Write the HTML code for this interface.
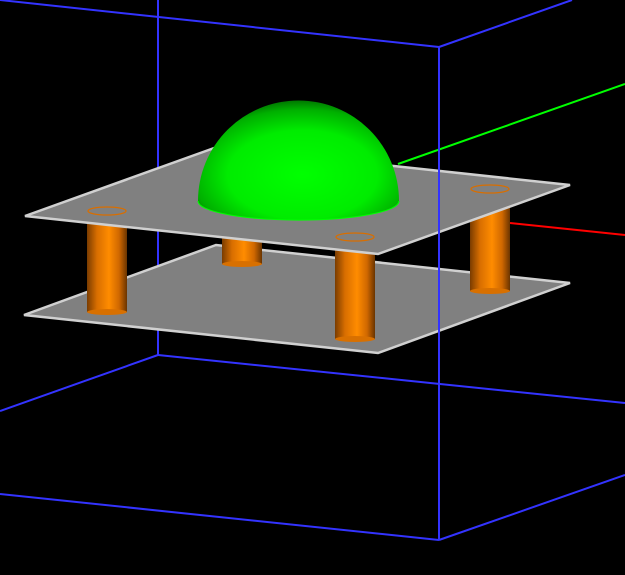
<!DOCTYPE html>
<html><head><style>html,body{margin:0;padding:0;background:#000;}svg{display:block}</style></head>
<body>
<svg width="625" height="575" viewBox="0 0 625 575" xmlns="http://www.w3.org/2000/svg">
<defs>
<linearGradient id="cyl" x1="0" x2="1" y1="0" y2="0">
<stop offset="0" stop-color="#7a3c00"/><stop offset="0.25" stop-color="#d86e00"/><stop offset="0.55" stop-color="#ff8c00"/><stop offset="0.8" stop-color="#d06800"/><stop offset="1" stop-color="#6a3400"/>
</linearGradient>
<radialGradient id="dome" cx="0.52" cy="0.62" r="0.62">
<stop offset="0" stop-color="#00ff00"/><stop offset="0.6" stop-color="#00ec00"/><stop offset="0.88" stop-color="#00b000"/><stop offset="1" stop-color="#007800"/>
</radialGradient>
</defs>
<g stroke="#3333ff" stroke-width="2" fill="none">
<line x1="158" y1="0" x2="158" y2="355"/>
<line x1="0" y1="0" x2="439" y2="47"/>
<line x1="439" y1="47" x2="572" y2="0"/>
<line x1="158" y1="355" x2="0" y2="411"/>
<line x1="158" y1="355" x2="625" y2="403"/>
<line x1="0" y1="494" x2="439" y2="540"/>
<line x1="439" y1="540" x2="625" y2="475"/>
</g>
<line x1="398" y1="164" x2="625" y2="84" stroke="#00ff00" stroke-width="2"/>
<line x1="510" y1="223" x2="625" y2="235" stroke="#ff0000" stroke-width="2"/>
<polygon points="24,315 216,245 570,283 378,353" fill="#808080" stroke="#d0d0d0" stroke-width="2.5"/>
<g>
<rect x="222" y="225" width="40" height="39" fill="url(#cyl)"/><ellipse cx="242" cy="264" rx="20" ry="3" fill="#d87000"/>
<rect x="470" y="189" width="40" height="102" fill="url(#cyl)"/><ellipse cx="490" cy="291" rx="20" ry="3" fill="#d87000"/>
<rect x="87" y="211" width="40" height="101" fill="url(#cyl)"/><ellipse cx="107" cy="312" rx="20" ry="3" fill="#d87000"/>
<rect x="335" y="237" width="40" height="102" fill="url(#cyl)"/><ellipse cx="355" cy="339" rx="20" ry="3" fill="#d87000"/>
</g>
<polygon points="25,216 217,147 570,185 378,254" fill="#808080" stroke="#d0d0d0" stroke-width="2.5"/>
<g fill="none" stroke="#d86e00" stroke-width="1.3">
<ellipse cx="107" cy="211" rx="19" ry="4"/>
<ellipse cx="355" cy="237" rx="19" ry="4"/>
<ellipse cx="490" cy="189" rx="19" ry="4"/>
</g>
<path d="M198,201 A100,100 0 0 1 399,201 A100,19 0 0 1 198,201 Z" fill="url(#dome)"/>
<path d="M198,201 A100,19 0 0 0 399,201" fill="none" stroke="#00ff00" stroke-width="1"/>
<line x1="439" y1="47" x2="439" y2="540" stroke="#3333ff" stroke-width="2"/>
</svg>
</body></html>
